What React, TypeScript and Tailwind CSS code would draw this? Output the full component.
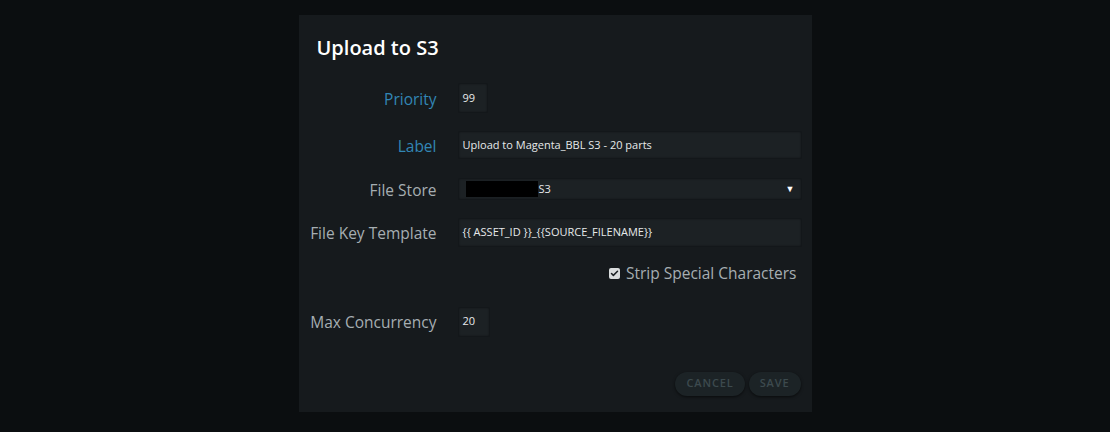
import { Check } from "lucide-react";

const font = { fontFamily: '"Open Sans", "Liberation Sans", sans-serif' };

type FieldRowProps = {
  label: string;
  accent?: boolean;
  className?: string;
  children: React.ReactNode;
};

const FieldRow = ({ label, accent = false, className = "", children }: FieldRowProps) => (
  <div className={`flex items-center ${className}`}>
    <div
      className={`w-[138px] shrink-0 pt-[3px] text-right text-[15.5px] leading-none ${
        accent ? "text-[#3286b5]" : "text-[#a6aeb2]"
      }`}
    >
      {label}
    </div>
    <div className="ml-[21px] flex flex-1 items-center pr-[10px]">{children}</div>
  </div>
);

const inputClass =
  "flex items-center rounded-[2px] border border-[#13171a] bg-[#1c2124] px-[4px] text-[11px] font-medium text-[#e6e9ea] shadow-[inset_0_0_2px_rgba(0,0,0,0.4)]";

export default function App() {
  return (
    <div style={font} className="flex h-[432px] w-full justify-center bg-[#0b0e10] pt-[15px]">
      <div className="flex h-[397px] w-[513px] flex-col bg-[#161a1d]">
        <h1 className="pl-[18px] pt-[20px] text-[20px] font-semibold leading-[26px] text-white">
          Upload to S3
        </h1>

        <FieldRow label="Priority" accent className="mt-[22px]">
          <div className={`${inputClass} h-[30px] w-[30px]`}>99</div>
        </FieldRow>

        <FieldRow label="Label" accent className="mt-[18px]">
          <div className={`${inputClass} h-[28px] flex-1`}>Upload to Magenta_BBL S3 - 20 parts</div>
        </FieldRow>

        <FieldRow label="File Store" className="mt-[19px]">
          <div className={`${inputClass} h-[22px] flex-1 pl-[7px] pr-[6px]`}>
            <span className="mr-[1px] h-[16px] w-[72px] bg-black" />
            <span>S3</span>
            <span className="ml-auto text-[9px] text-white">▼</span>
          </div>
        </FieldRow>

        <FieldRow label="File Key Template" className="mt-[18px]">
          <div className={`${inputClass} h-[29px] flex-1`}>{"{{ ASSET_ID }}_{{SOURCE_FILENAME}}"}</div>
        </FieldRow>

        <div className="mt-[19px] flex items-center justify-end pr-[15px] text-[15.5px] leading-none text-[#a6aeb2]">
          <span className="mr-[6px] flex h-[11px] w-[11px] items-center justify-center rounded-[2px] bg-[#d9dcdd]">
            <Check className="h-[9px] w-[9px] text-[#1a1f22]" strokeWidth={4} />
          </span>
          Strip Special Characters
        </div>

        <FieldRow label="Max Concurrency" className="mt-[25px]">
          <div className={`${inputClass} h-[30px] w-[32px]`}>20</div>
        </FieldRow>

        <div className="mt-[35px] flex justify-end gap-[4px] pr-[11px]">
          <button className="h-[24px] rounded-full bg-[#1c2326] px-[11px] text-[11px] font-semibold tracking-[0.08em] text-[#3c4a4e] shadow-[0_1px_3px_rgba(0,0,0,0.6)]">
            CANCEL
          </button>
          <button className="h-[24px] rounded-full bg-[#1c2326] px-[11px] text-[11px] font-semibold tracking-[0.08em] text-[#3c4a4e] shadow-[0_1px_3px_rgba(0,0,0,0.6)]">
            SAVE
          </button>
        </div>
      </div>
    </div>
  );
}
